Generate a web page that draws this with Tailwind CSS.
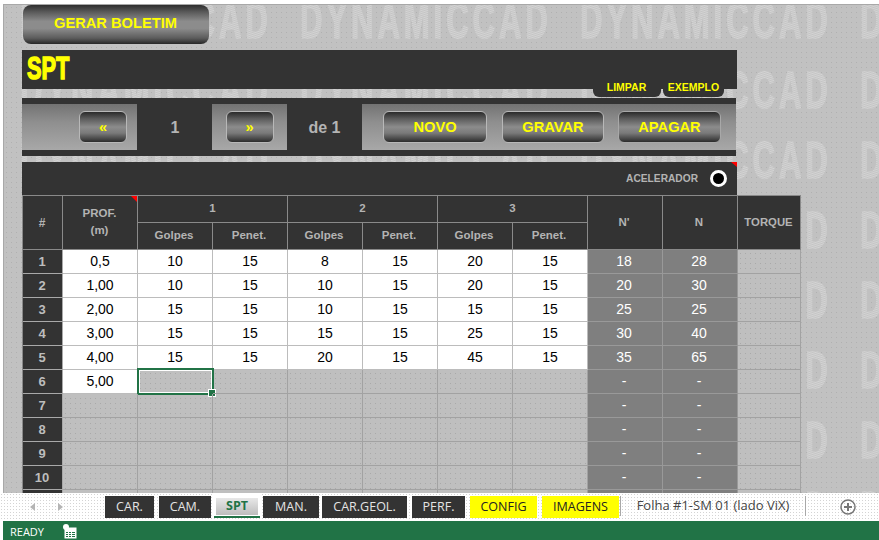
<!DOCTYPE html>
<html lang="en">
<head>
    <meta charset="UTF-8">
    <title>SPT</title>
    <script src="https://cdn.jsdelivr.net/npm/@tailwindcss/browser@4"></script>
</head>
<body class="bg-white w-[879px] h-[540px] overflow-hidden font-['Liberation_Sans',Arial,sans-serif]">
    <!-- worksheet area -->
    <div class="relative ml-[3px] mt-[4px] h-[489px] border-t border-l border-[#a8a8a8] bg-[#c1c1c1] overflow-hidden">
        <svg class="absolute inset-0" width="876" height="488">
            <defs>
                <pattern id="checker" width="2" height="2" patternUnits="userSpaceOnUse">
                    <rect width="2" height="2" fill="#c5c5c5"/>
                    <rect width="1" height="1" fill="#d3d3d3"/>
                    <rect x="1" y="1" width="1" height="1" fill="#d3d3d3"/>
                </pattern>
                <pattern id="dots" width="5" height="5" patternUnits="userSpaceOnUse">
                    <rect x="2" y="2" width="1" height="1" fill="#b0b0b0"/>
                </pattern>
                <pattern id="mark" x="0" y="-35" width="280" height="70" patternUnits="userSpaceOnUse">
                    <text transform="translate(16 68) scale(0.6 1)" font-family="Liberation Sans" font-weight="700" font-size="52" textLength="413" lengthAdjust="spacing" fill="url(#checker)" stroke="url(#checker)" stroke-width="1.5">DYNAMICCAD</text>
                </pattern>
            </defs>
            <rect width="876" height="488" fill="url(#dots)"/>
            <rect width="876" height="488" fill="url(#mark)"/>
        </svg>

        <div class="relative pl-[18px]">
            <button class="ml-px w-[186px] h-[39px] pb-[3px] pr-px rounded-lg bg-[linear-gradient(#2e2e2e,#5a5a5a_18%,#8c8c8c_42%,#8c8c8c_60%,#5c5c5c_85%,#262626)] text-[#ffff00] font-bold text-[14.67px]">GERAR BOLETIM</button>

            <div class="relative mt-[6px] w-[715px] h-[39px] bg-[#333] pl-[5px] pb-[3px] flex items-center">
                <span class="origin-left scale-x-[0.7] text-[#ffff00] font-bold text-[31px] leading-none [-webkit-text-stroke:1.5px_#ffff00]">SPT</span>
                <div class="absolute left-[571px] top-[28px] flex gap-[2px] text-[#ffff00] font-bold text-[10.5px]">
                    <span class="w-[68px] h-[19px] pr-px bg-[#333] rounded-b-md flex items-center justify-center">LIMPAR</span>
                    <span class="w-[61px] h-[19px] bg-[#333] rounded-b-md flex items-center justify-center">EXEMPLO</span>
                </div>
            </div>

            <!-- navigation -->
            <div class="mt-[9px] w-[714px] h-[58px] bg-[#333] py-[6px] flex text-[#b4b4b4] font-bold text-[16px]">
                <div class="w-[115px] flex items-center justify-end pr-[10px] bg-[linear-gradient(#737373,#8f8f8f_40%,#a8a8a8)]">
                    <button class="w-[48px] h-[32px] rounded-md border border-[#b8b8b8] bg-[linear-gradient(#2a2a2a,#5a5a5a_22%,#8c8c8c_50%,#7a7a7a_70%,#2c2c2c)] text-[#ffff00] text-[14.67px]">«</button>
                </div>
                <div class="w-[75px] pt-px pl-px flex items-center justify-center">1</div>
                <div class="w-[75px] flex items-center justify-center bg-[linear-gradient(#737373,#8f8f8f_40%,#a8a8a8)]">
                    <button class="w-[48px] h-[32px] rounded-md border border-[#b8b8b8] bg-[linear-gradient(#2a2a2a,#5a5a5a_22%,#8c8c8c_50%,#7a7a7a_70%,#2c2c2c)] text-[#ffff00] text-[14.67px]">»</button>
                </div>
                <div class="w-[75px] pt-px flex items-center justify-center">de 1</div>
                <div class="w-[374px] flex items-center pl-[21px] bg-[linear-gradient(#737373,#8f8f8f_40%,#a8a8a8)] text-[#ffff00] text-[14.67px]">
                    <button class="w-[104px] h-[32px] rounded-md border border-[#b8b8b8] bg-[linear-gradient(#2a2a2a,#5a5a5a_22%,#8c8c8c_50%,#7a7a7a_70%,#2c2c2c)]">NOVO</button>
                    <button class="ml-[15px] w-[102px] h-[32px] rounded-md border border-[#b8b8b8] bg-[linear-gradient(#2a2a2a,#5a5a5a_22%,#8c8c8c_50%,#7a7a7a_70%,#2c2c2c)]">GRAVAR</button>
                    <button class="ml-[14px] w-[103px] h-[32px] rounded-md border border-[#a8a8a8] bg-[linear-gradient(#2a2a2a,#5a5a5a_22%,#8c8c8c_50%,#7a7a7a_70%,#2c2c2c)]">APAGAR</button>
                </div>
            </div>

            <!-- acelerador -->
            <div class="relative mt-[6px] w-[715px] h-[33px] bg-[#333] flex items-center justify-end pr-[10px] gap-[12px] text-[#b4b4b4] font-bold text-[10.2px]">
                <span class="absolute right-0 top-0 w-[6px] h-[5px] bg-[#ff0000] [clip-path:polygon(0_0,100%_0,100%_100%)]"></span>
                <span>ACELERADOR</span>
                <span class="w-[17px] h-[17px] rounded-full bg-black border-[3px] border-white"></span>
            </div>

            <!-- table -->
            <div id="sheet" class="w-[779px] grid grid-cols-[40px_75px_75px_75px_75px_75px_75px_75px_75px_75px_63px] grid-rows-[27px_27px] auto-rows-[24px] border-t border-l border-[#8a8a8a] bg-[#bfbfbf] bg-[radial-gradient(#a9a9a9_0.9px,transparent_0.9px)] bg-[length:5px_5px]">
                <div class="row-span-2 pr-px flex items-center justify-center bg-[#333] border-r border-b border-[#8a8a8a] text-[#b4b4b4] font-bold text-[12px]">#</div>
                <div class="relative row-span-2 pb-px pr-px flex items-center justify-center text-center bg-[#333] border-r border-b border-[#8a8a8a] text-[#b4b4b4] font-bold text-[11.5px] leading-[17px]">
                    <span class="absolute right-0 top-0 w-[6px] h-[6px] bg-[#ff0000] [clip-path:polygon(0_0,100%_0,100%_100%)]"></span>
                    PROF.<br>(m)
                </div>
                <div class="col-span-2 flex items-center justify-center bg-[#333] border-r border-b border-[#8a8a8a] text-[#b4b4b4] font-bold text-[11.5px]">1</div>
                <div class="col-span-2 flex items-center justify-center bg-[#333] border-r border-b border-[#8a8a8a] text-[#b4b4b4] font-bold text-[11.5px]">2</div>
                <div class="col-span-2 flex items-center justify-center bg-[#333] border-r border-b border-[#8a8a8a] text-[#b4b4b4] font-bold text-[11.5px]">3</div>
                <div class="row-span-2 pr-[2px] flex items-center justify-center bg-[#333] border-r border-b border-[#8a8a8a] text-[#b4b4b4] font-bold text-[11.5px]">N'</div>
                <div class="row-span-2 pr-[2px] flex items-center justify-center bg-[#333] border-r border-b border-[#8a8a8a] text-[#b4b4b4] font-bold text-[11.5px]">N</div>
                <div class="row-span-2 pr-px flex items-center justify-center bg-[#333] border-r border-b border-[#8a8a8a] text-[#b4b4b4] font-bold text-[11.33px]">TORQUE</div>
                <div class="pr-[2px] flex items-center justify-center bg-[#333] border-r border-b border-[#8a8a8a] text-[#b4b4b4] font-bold text-[11.5px]">Golpes</div>
                <div class="pr-[2px] flex items-center justify-center bg-[#333] border-r border-b border-[#8a8a8a] text-[#b4b4b4] font-bold text-[11.5px]">Penet.</div>
                <div class="pr-[2px] flex items-center justify-center bg-[#333] border-r border-b border-[#8a8a8a] text-[#b4b4b4] font-bold text-[11.5px]">Golpes</div>
                <div class="pr-[2px] flex items-center justify-center bg-[#333] border-r border-b border-[#8a8a8a] text-[#b4b4b4] font-bold text-[11.5px]">Penet.</div>
                <div class="pr-[2px] flex items-center justify-center bg-[#333] border-r border-b border-[#8a8a8a] text-[#b4b4b4] font-bold text-[11.5px]">Golpes</div>
                <div class="pr-[2px] flex items-center justify-center bg-[#333] border-r border-b border-[#8a8a8a] text-[#b4b4b4] font-bold text-[11.5px]">Penet.</div>
            </div>
        </div>
    </div>

    <!-- sheet tabs -->
    <div class="flex items-start h-[27px] bg-white bg-[radial-gradient(#d4d4d4_0.8px,transparent_0.8px)] bg-[length:3px_3px] font-['Open_Sans',sans-serif] text-[12.5px]">
        <div class="w-[105px] h-full flex items-center gap-[23px] pl-[30px] text-[#b5b5b5]">
            <svg width="5" height="8" viewBox="0 0 5 8"><path d="M5 0 L0 4 L5 8 Z" fill="currentColor"/></svg>
            <svg width="5" height="8" viewBox="0 0 5 8"><path d="M0 0 L5 4 L0 8 Z" fill="currentColor"/></svg>
        </div>
        <div class="mt-[3px] w-[49px] h-[22px] flex items-center justify-center bg-[#333] text-[#e4e4e4]">CAR.</div>
        <div class="mt-[3px] ml-[5px] w-[52px] h-[22px] flex items-center justify-center bg-[#333] text-[#e4e4e4]">CAM.</div>
        <div class="ml-[3px] w-[46px] h-[25px] pt-[5px] bg-white border-b-2 border-[#217346]">
            <div class="mx-[2px] h-[17px] flex items-center justify-center bg-[linear-gradient(#e8e8e8,#bdbdbd)] text-[#217346] font-bold">SPT</div>
        </div>
        <div class="mt-[3px] ml-[3px] w-[56px] h-[22px] flex items-center justify-center bg-[#333] text-[#e4e4e4]">MAN.</div>
        <div class="mt-[3px] ml-[3px] w-[85px] h-[22px] flex items-center justify-center bg-[#333] text-[#e4e4e4]">CAR.GEOL.</div>
        <div class="mt-[3px] ml-[5px] w-[53px] h-[22px] flex items-center justify-center bg-[#333] text-[#e4e4e4]">PERF.</div>
        <div class="mt-[3px] ml-[5px] w-[67px] h-[22px] flex items-center justify-center bg-[#ffff00] text-[#222]">CONFIG</div>
        <div class="mt-[3px] ml-[5px] w-[77px] h-[22px] flex items-center justify-center bg-[#ffff00] text-[#222]">IMAGENS</div>
        <div class="mt-[3px] ml-px w-[186px] h-[20px] flex items-center justify-center border-x border-[#a8a8a8] text-[#444] text-[13px]">Folha #1-SM 01 (lado ViX)</div>
        <svg class="mt-[6px] ml-[34px]" width="16" height="16" viewBox="0 0 16 16" fill="none" stroke="#777" stroke-width="1.5"><circle cx="8" cy="8" r="7"/><path d="M8 4v8M4 8h8" stroke-width="2"/></svg>
    </div>

    <!-- status bar -->
    <div class="ml-[3px] mt-px h-[19px] bg-[#217346] flex items-center pl-[7px] gap-[19px] text-white font-['Open_Sans',sans-serif] text-[11px]">
        <span class="pt-[3px]">READY</span>
        <svg class="mt-[2px]" width="14" height="15" viewBox="0 0 14 15" fill="none">
            <circle cx="3" cy="3" r="3" fill="#fff"/>
            <rect x="1.5" y="3.5" width="12" height="11" fill="#fff"/>
            <path d="M3 8.5h2M6 8.5h2M9 8.5h3M3 10.5h2M6 10.5h2M9 10.5h3M3 12.5h2M6 12.5h2M9 12.5h3" stroke="#217346"/>
        </svg>
    </div>

    <script>
        // rows of the SPT sheet: prof, then golpes/penet. per set, then N' and N
        const rows = [
            ['0,5', '10', '15', '8', '15', '20', '15', '18', '28'],
            ['1,00', '10', '15', '10', '15', '20', '15', '20', '30'],
            ['2,00', '15', '15', '10', '15', '15', '15', '25', '25'],
            ['3,00', '15', '15', '15', '15', '25', '15', '30', '40'],
            ['4,00', '15', '15', '20', '15', '45', '15', '35', '65'],
            ['5,00', '', '', '', '', '', '', '-', '-'],
            ['', '', '', '', '', '', '', '-', '-'],
            ['', '', '', '', '', '', '', '-', '-'],
            ['', '', '', '', '', '', '', '-', '-'],
            ['', '', '', '', '', '', '', '-', '-'],
            ['', '', '', '', '', '', '', '', ''], // only its top edge shows above the tabs
        ];
        const idxCell = 'pr-px flex items-center justify-center bg-[#333] border-r border-b border-[#a9a9a9] text-[#bdbdbd] font-bold text-[13px]';
        const valCell = 'flex items-center justify-center bg-white border-r border-b border-[#bcbcbc] text-black text-[14px]';
        const emptyCell = 'relative border-r border-b border-[#a2a2a2]';
        const calcCell = 'pr-[2px] flex items-center justify-center bg-[#7f7f7f] border-r border-b border-[#999] text-white text-[14px]';

        const sheet = document.getElementById('sheet');
        const addCell = (cls, text) => {
            const el = document.createElement('div');
            el.className = cls;
            el.textContent = text;
            sheet.appendChild(el);
            return el;
        };

        rows.forEach((row, i) => {
            addCell(idxCell, i < 10 ? i + 1 : '');
            row.forEach((v, j) => {
                const cell = addCell(j >= 7 ? calcCell : v ? valCell : emptyCell, v);
                // selected cell, row 6 first golpes
                if (i === 5 && j === 1) {
                    cell.innerHTML = '<div class="absolute -left-px -top-[2px] w-[77px] h-[27px] border-2 border-[#217346] shadow-[inset_0_0_0_1px_white]"></div><div class="absolute -right-[3px] -bottom-[3px] w-[6px] h-[6px] bg-[#217346] outline outline-white"></div>';
                }
            });
            addCell(emptyCell, '');
        });
    </script>
</body>
</html>
